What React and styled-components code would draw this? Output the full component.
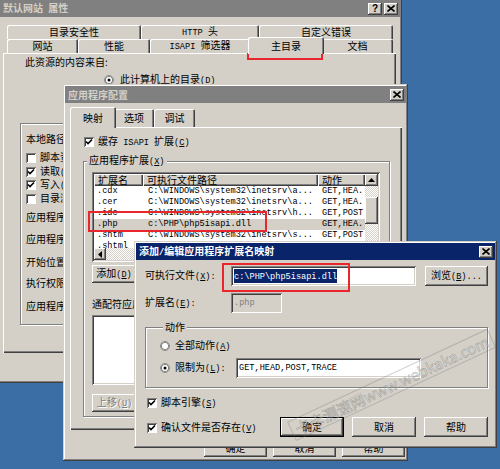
import React from "react";
import styled, { createGlobalStyle } from "styled-components";

const GlobalStyle = createGlobalStyle`
  html, body { margin: 0; padding: 0; background: #3a6ea5; }
  * { box-sizing: border-box; }
`;

const RAISED =
  "inset -1px -1px #404040, inset 1px 1px #fff, inset -2px -2px #808080, inset 2px 2px #d4d0c8";
const SUNKEN =
  "inset 1px 1px #808080, inset -1px -1px #fff, inset 2px 2px #404040, inset -2px -2px #d4d0c8";
const DITHER = "repeating-conic-gradient(#fff 0 25%, #d4d0c8 0 50%) 0 0 / 2px 2px";

const Desktop = styled.div`
  position: relative;
  width: 500px;
  height: 469px;
  overflow: hidden;
  background: #3a6ea5;
  font-family: "Noto Sans CJK SC", "Liberation Sans", sans-serif;
  font-size: 10px;
  line-height: 12px;
  color: #000;
`;

const Window = styled.div`
  position: absolute;
  left: ${(p) => p.$x}px;
  top: ${(p) => p.$y}px;
  width: ${(p) => p.$w}px;
  height: ${(p) => p.$h}px;
  padding: 2px;
  background: #d4d0c8;
  box-shadow: inset -1px -1px #404040, inset 1px 1px #d4d0c8,
    inset -2px -2px #808080, inset 2px 2px #fff;
  display: flex;
  flex-direction: column;
`;

const TitleBar = styled.div`
  height: 17px;
  flex: none;
  display: flex;
  align-items: center;
  padding: 0 2px 0 3px;
  background: ${(p) => (p.$active ? "#0a246a" : "#808080")};
  color: ${(p) => (p.$active ? "#fff" : "#d4d0c8")};
  font-weight: bold;
`;

const TitleText = styled.span`
  flex: 1;
  white-space: nowrap;
  overflow: hidden;
`;

const CapButton = styled.span`
  width: 14px;
  height: 12px;
  flex: none;
  margin-left: ${(p) => p.$gap || 0}px;
  display: flex;
  align-items: center;
  justify-content: center;
  background: #d4d0c8;
  color: #000;
  font-family: "Liberation Sans", sans-serif;
  font-size: 10px;
  font-weight: bold;
  box-shadow: inset -1px -1px #404040, inset 1px 1px #fff, inset -2px -2px #808080;
`;

const Body = styled.div`
  flex: 1;
  min-height: 0;
  display: flex;
  flex-direction: column;
  padding: ${(p) => p.$pad};
`;

const Lat = styled.span`
  font-family: "Liberation Mono", monospace;
  font-size: 8.6px;
`;

const TabRow = styled.div`
  position: relative;
  z-index: 1;
  display: flex;
  flex: none;
  height: ${(p) => p.$h}px;
  margin-left: ${(p) => p.$ml}px;
`;

const Tab = styled.div`
  width: ${(p) => p.$w}px;
  flex: none;
  display: flex;
  align-items: center;
  justify-content: center;
  white-space: nowrap;
  background: #d4d0c8;
  border-radius: 2px 2px 0 0;
  box-shadow: inset 1px 1px #fff, inset -1px 0 #404040, inset -2px 0 #808080;
  ${(p) =>
    p.$sel &&
    `
    width: ${p.$w + 4}px;
    margin: -2px -2px -1px;
    height: calc(100% + 3px);
    position: relative;
    z-index: 2;
  `}
`;

const Panel = styled.div`
  flex: none;
  width: ${(p) => p.$w}px;
  height: ${(p) => p.$h}px;
  margin-left: ${(p) => p.$ml || 0}px;
  box-shadow: inset 1px 1px #fff, inset -1px -1px #404040, inset -2px -2px #808080;
  display: flex;
  flex-direction: column;
  overflow: hidden;
`;

const Row = styled.div`
  display: flex;
  align-items: center;
  flex: none;
  height: ${(p) => p.$h || 12}px;
  margin: ${(p) => p.$mt || 0}px 0 0 ${(p) => p.$ml || 0}px;
  gap: ${(p) => p.$gap || 0}px;
  white-space: nowrap;
`;

const Label = styled.span`
  flex: none;
  width: ${(p) => (p.$w ? `${p.$w}px` : "auto")};
  white-space: nowrap;
`;

const Box = styled.span`
  width: 10px;
  height: 10px;
  flex: none;
  display: flex;
  align-items: center;
  justify-content: center;
  background: #fff;
  box-shadow: inset 1px 1px #808080, inset -1px -1px #fff, inset 2px 2px #404040;
`;

const Button = styled.div`
  width: ${(p) => p.$w}px;
  height: ${(p) => p.$h || 20}px;
  flex: none;
  margin-left: ${(p) => p.$ml || 0}px;
  display: flex;
  align-items: center;
  justify-content: center;
  white-space: nowrap;
  background: #d4d0c8;
  box-shadow: ${(p) =>
    p.$def
      ? "inset -1px -1px #000, inset 1px 1px #000, inset -2px -2px #404040, inset 2px 2px #fff, inset -3px -3px #808080"
      : RAISED};
  color: ${(p) => (p.$off ? "#808080" : "#000")};
  text-shadow: ${(p) => (p.$off ? "1px 1px #fff" : "none")};
`;

const ButtonRow = styled.div`
  display: flex;
  flex: none;
  gap: ${(p) => p.$gap || 0}px;
  margin: ${(p) => p.$mt || 0}px 0 0 ${(p) => p.$ml || 0}px;
  justify-content: ${(p) => (p.$end ? "flex-end" : "flex-start")};
  align-self: ${(p) => p.$self || "auto"};
  padding-right: ${(p) => p.$pr || 0}px;
`;

const Field = styled.div`
  width: ${(p) => p.$w}px;
  height: ${(p) => p.$h || 20}px;
  flex: none;
  display: flex;
  align-items: center;
  padding: 0 3px;
  overflow: hidden;
  white-space: nowrap;
  background: ${(p) => (p.$off ? "#d4d0c8" : "#fff")};
  color: ${(p) => (p.$off ? "#808080" : "#000")};
  box-shadow: ${SUNKEN};
`;

const Selected = styled.span`
  background: #0a246a;
  color: #fff;
`;

const Group = styled.fieldset`
  flex: none;
  margin: ${(p) => p.$mt || 0}px 0 0 ${(p) => p.$ml || 0}px;
  padding: 0 0 0 ${(p) => p.$pl || 0}px;
  width: ${(p) => p.$w}px;
  height: ${(p) => p.$h}px;
  min-inline-size: 0;
  border: 1px solid #808080;
  box-shadow: 1px 1px 0 #fff, inset 1px 1px 0 #fff;
  display: flex;
  flex-direction: column;
`;

const Legend = styled.legend`
  margin-left: 3px;
  padding: 0 2px;
  line-height: 12px;
  background: #d4d0c8;
`;

const Frame = styled.div`
  flex: none;
  margin: ${(p) => p.$mt || 0}px 0 0 ${(p) => p.$ml || 0}px;
  padding: ${(p) => p.$pt || 0}px 0 0 5px;
  width: ${(p) => p.$w}px;
  height: ${(p) => p.$h}px;
  border: 1px solid #808080;
  box-shadow: 1px 1px 0 #fff, inset 1px 1px 0 #fff;
  display: flex;
  flex-direction: column;
`;

const List = styled.div`
  flex: none;
  width: 288px;
  height: 90px;
  margin: 4px 0 0 8px;
  padding: 2px;
  background: #fff;
  box-shadow: ${SUNKEN};
  display: grid;
  grid-template-columns: 1fr 13px;
  grid-template-rows: 1fr 12px;
  overflow: hidden;
`;

const ListMain = styled.div`
  display: flex;
  flex-direction: column;
  overflow: hidden;
`;

const HeadRow = styled.div`
  display: flex;
  height: 12px;
  flex: none;
`;

const HeadCell = styled.div`
  width: ${(p) => p.$w}px;
  flex: none;
  display: flex;
  align-items: center;
  padding-left: 4px;
  overflow: hidden;
  white-space: nowrap;
  background: #d4d0c8;
  box-shadow: inset 1px 1px #fff, inset -1px -1px #404040, inset -2px -2px #808080;
`;

const ItemRow = styled.div`
  display: flex;
  height: 11px;
  flex: none;
  background: ${(p) => (p.$sel ? "#d4d0c8" : "transparent")};
`;

const Cell = styled.div`
  width: ${(p) => p.$w}px;
  flex: none;
  padding-left: ${(p) => p.$pl}px;
  overflow: hidden;
  white-space: nowrap;
  font-family: "Liberation Mono", monospace;
  font-size: 8.6px;
  line-height: 11px;
`;

const VScroll = styled.div`
  display: flex;
  flex-direction: column;
  background: ${DITHER};
`;

const HScroll = styled.div`
  display: flex;
  background: ${DITHER};
`;

const Corner = styled.div`
  background: #d4d0c8;
`;

const ScrollBtn = styled.div`
  width: ${(p) => p.$w || 13}px;
  height: 12px;
  flex: none;
  display: flex;
  align-items: center;
  justify-content: center;
  background: #d4d0c8;
  box-shadow: ${RAISED};
`;

const Thumb = styled.div`
  height: 27px;
  margin-top: 11px;
  flex: none;
  background: #d4d0c8;
  box-shadow: ${RAISED};
`;

const WhiteBox = styled.div`
  flex: none;
  width: ${(p) => p.$w}px;
  height: ${(p) => p.$h}px;
  margin: ${(p) => p.$mt || 0}px 0 0 ${(p) => p.$ml || 0}px;
  background: #fff;
  box-shadow: ${SUNKEN};
`;

const Split = styled.div`
  display: flex;
  justify-content: space-between;
  flex: none;
  height: 40px;
  margin-top: ${(p) => p.$mt || 0}px;
`;

const Column = styled.div`
  display: flex;
  flex-direction: column;
`;

const Mark = styled.div`
  position: absolute;
  left: ${(p) => p.$x}px;
  top: ${(p) => p.$y}px;
  width: ${(p) => p.$w}px;
  height: ${(p) => p.$h}px;
  border: 2px solid #e8262b;
  pointer-events: none;
`;

const Watermark = styled.div`
  position: absolute;
  left: 296px;
  top: 420px;
  height: 21px;
  padding: 0 4px;
  display: flex;
  align-items: center;
  white-space: nowrap;
  transform-origin: 0 100%;
  transform: rotate(-25deg);
  font-family: "Noto Sans CJK SC", "Liberation Sans", sans-serif;
  font-size: 15px;
  color: rgba(255, 255, 255, 0.35);
  -webkit-text-stroke: 0.6px rgba(90, 90, 90, 0.45);
  border: 1px solid rgba(110, 110, 110, 0.3);
  pointer-events: none;
`;

// SimSun-like mixed text: ASCII runs in a half-width mono face, "&X" underlines X
function T({ s }) {
  return (
    <span>
      {s
        .split(/([\x20-\x7e]+)/)
        .filter(Boolean)
        .map((part, i) => {
          if (!/^[\x20-\x7e]+$/.test(part)) return <React.Fragment key={i}>{part}</React.Fragment>;
          const bits = part.split(/&(.)/);
          return (
            <Lat key={i}>
              {bits.map((b, j) => (j % 2 ? <u key={j}>{b}</u> : b))}
            </Lat>
          );
        })}
    </span>
  );
}

function CloseIcon() {
  return (
    <svg width="8" height="7" viewBox="0 0 8 7">
      <path d="M0.5 0.5 L7.5 6.5 M7.5 0.5 L0.5 6.5" stroke="#000" strokeWidth="1.6" />
    </svg>
  );
}

function Title({ text, active, help }) {
  return (
    <TitleBar $active={active}>
      <TitleText>
        <T s={text} />
      </TitleText>
      {help && <CapButton>?</CapButton>}
      <CapButton $gap={help ? 2 : 0}>
        <CloseIcon />
      </CapButton>
    </TitleBar>
  );
}

function Check({ on, label, mt, ml }) {
  return (
    <Row $mt={mt} $ml={ml} $gap={4}>
      <Box>
        {on && (
          <svg width="8" height="8" viewBox="0 0 8 8">
            <path d="M1 3.5 L3 5.5 L7 1.5" stroke="#000" strokeWidth="1.6" fill="none" />
          </svg>
        )}
      </Box>
      <Label>
        <T s={label} />
      </Label>
    </Row>
  );
}

function Radio({ on }) {
  return (
    <svg width="10" height="10" viewBox="0 0 12 12" style={{ flex: "none" }}>
      <circle cx="6" cy="6" r="5.5" fill="#fff" stroke="#808080" />
      <circle cx="6" cy="6" r="4.4" fill="#fff" stroke="#404040" strokeWidth="0.8" />
      {on && <circle cx="6" cy="6" r="1.8" fill="#000" />}
    </svg>
  );
}

const rows = [
  [".cdx", "C:\\WINDOWS\\system32\\inetsrv\\a...", "GET,HEA..."],
  [".cer", "C:\\WINDOWS\\system32\\inetsrv\\a...", "GET,HEA..."],
  [".idc", "C:\\WINDOWS\\system32\\inetsrv\\h...", "GET,POST"],
  [".php", "c:\\PHP\\php5isapi.dll", "GET,HEA...", true],
  [".shtm", "C:\\WINDOWS\\system32\\inetsrv\\s...", "GET,POST"],
  [".shtml", "C:\\WINDOWS\\system32\\inetsrv\\s...", "GET,POST"],
];

function PropertiesWindow() {
  return (
    <Window $x={-2} $y={-2} $w={404} $h={385}>
      <Title text="默认网站 属性" help />
      <Body $pad="8px 0 0 3px">
        <TabRow $h={14} $ml={4}>
          <Tab $w={134}>目录安全性</Tab>
          <Tab $w={118}><T s="HTTP 头" /></Tab>
          <Tab $w={134}>自定义错误</Tab>
        </TabRow>
        <TabRow $h={14} $ml={4}>
          <Tab $w={71}>网站</Tab>
          <Tab $w={72}>性能</Tab>
          <Tab $w={100}><T s="ISAPI 筛选器" /></Tab>
          <Tab $w={72} $sel>主目录</Tab>
          <Tab $w={71}>文档</Tab>
        </TabRow>
        <Panel $w={393} $h={300}>
          <Row $mt={3} $ml={22}>此资源的内容来自:</Row>
          <Row $mt={6} $ml={101} $gap={6}>
            <Radio on />
            <Label><T s="此计算机上的目录(&D)" /></Label>
          </Row>
          <Frame $mt={37} $ml={17} $w={365} $h={202} $pt={10}>
            <Row><T s="本地路径(&C):" /></Row>
            <Check mt={6} label="脚本资源访问(&T)" />
            <Check mt={1.5} on label="读取(&R)" />
            <Check mt={1.5} on label="写入(&W)" />
            <Check mt={1.5} label="目录浏览(&B)" />
            <Row $mt={6.5}>应用程序设置</Row>
            <Row $mt={11}><T s="应用程序名(&M):" /></Row>
            <Row $mt={10}>开始位置:</Row>
            <Row $mt={10}><T s="执行权限(&P):" /></Row>
            <Row $mt={11}><T s="应用程序池(&N):" /></Row>
          </Frame>
        </Panel>
      </Body>
    </Window>
  );
}

function ConfigWindow() {
  return (
    <Window $x={63} $y={84} $w={345} $h={377}>
      <Title text="应用程序配置" />
      <Body $pad="6px 0 0 5px">
        <TabRow $h={18} $ml={2}>
          <Tab $w={42} $sel>映射</Tab>
          <Tab $w={40}>选项</Tab>
          <Tab $w={41}>调试</Tab>
        </TabRow>
        <Panel $w={332} $h={303}>
          <Check mt={9} ml={14} on label="缓存 ISAPI 扩展(&C)" />
          <Group $mt={6} $ml={13} $w={307} $h={263}>
            <Legend><T s="应用程序扩展(&X)" /></Legend>
            <List>
              <ListMain>
                <HeadRow>
                  <HeadCell $w={49}>扩展名</HeadCell>
                  <HeadCell $w={175}>可执行文件路径</HeadCell>
                  <HeadCell $w={47}>动作</HeadCell>
                </HeadRow>
                {rows.map(([ext, path, act, sel]) => (
                  <ItemRow key={ext} $sel={sel}>
                    <Cell $w={49} $pl={3}>{ext}</Cell>
                    <Cell $w={175} $pl={5}>{path}</Cell>
                    <Cell $w={47} $pl={4}>{act}</Cell>
                  </ItemRow>
                ))}
              </ListMain>
              <VScroll>
                <ScrollBtn>
                  <svg width="7" height="4" viewBox="0 0 7 4"><polygon points="0,4 3.5,0 7,4" fill="#000" /></svg>
                </ScrollBtn>
                <Thumb />
              </VScroll>
              <HScroll>
                <ScrollBtn $w={12}>
                  <svg width="4" height="7" viewBox="0 0 4 7"><polygon points="4,0 0,3.5 4,7" fill="#000" /></svg>
                </ScrollBtn>
              </HScroll>
              <Corner />
            </List>
            <ButtonRow $mt={3} $ml={8} $gap={6}>
              <Button $w={44} $h={18}><T s="添加(&D)" /></Button>
              <Button $w={44} $h={18}><T s="编辑(&E)" /></Button>
              <Button $w={44} $h={18}><T s="删除(&R)" /></Button>
            </ButtonRow>
            <Row $mt={16} $ml={8}><T s="通配符应用程序映射(执行顺序)(&M):" /></Row>
            <WhiteBox $mt={4} $ml={8} $w={220} $h={70} />
            <ButtonRow $mt={9} $ml={8} $gap={6}>
              <Button $w={45} $h={18} $off><T s="上移(&U)" /></Button>
              <Button $w={45} $h={18} $off><T s="下移(&O)" /></Button>
            </ButtonRow>
          </Group>
        </Panel>
        <ButtonRow $mt={9} $gap={6} $end $pr={1}>
          <Button $w={63} $h={18}>确定</Button>
          <Button $w={63} $h={18}>取消</Button>
          <Button $w={63} $h={18}>帮助</Button>
        </ButtonRow>
      </Body>
    </Window>
  );
}

function MappingWindow() {
  return (
    <Window $x={134} $y={241} $w={363} $h={207}>
      <Title text="添加/编辑应用程序扩展名映射" active />
      <Body $pad="5px 7px 0 9px">
        <Row $h={21}>
          <Label $w={86}><T s="可执行文件(&X):" /></Label>
          <Field $w={185}>
            <Selected><Lat>c:\PHP\php5isapi.dll</Lat></Selected>
          </Field>
          <Button $w={63} $ml={9}><T s="浏览(&B)..." /></Button>
        </Row>
        <Row $h={20} $mt={7}>
          <Label $w={86}><T s="扩展名(&E):" /></Label>
          <Field $w={51} $off><Lat>.php</Lat></Field>
        </Row>
        <Group $mt={8} $w={343} $h={67} $pl={14}>
          <Legend>动作</Legend>
          <Row $mt={7} $gap={5}>
            <Radio />
            <Label><T s="全部动作(&A)" /></Label>
          </Row>
          <Row $mt={6} $h={20} $gap={5}>
            <Radio on />
            <Label $w={56}><T s="限制为(&L):" /></Label>
            <Field $w={185}><Lat>GET,HEAD,POST,TRACE</Lat></Field>
          </Row>
        </Group>
        <Split $mt={9}>
          <Column>
            <Check ml={2} on label="脚本引擎(&S)" />
            <Check mt={13} ml={2} on label="确认文件是否存在(&V)" />
          </Column>
          <ButtonRow $gap={8} $self="flex-end">
            <Button $w={64} $def>确定</Button>
            <Button $w={64}>取消</Button>
            <Button $w={64}>帮助</Button>
          </ButtonRow>
        </Split>
      </Body>
    </Window>
  );
}

export default function App() {
  return (
    <>
      <GlobalStyle />
      <Desktop>
        <PropertiesWindow />
        <ConfigWindow />
        <MappingWindow />
        <Mark $x={247} $y={31} $w={76} $h={29} />
        <Mark $x={88} $y={211} $w={179} $h={21} />
        <Mark $x={222} $y={263} $w={128} $h={29} />
        <Watermark>卡卡测速网www.webkaka.com</Watermark>
      </Desktop>
    </>
  );
}
